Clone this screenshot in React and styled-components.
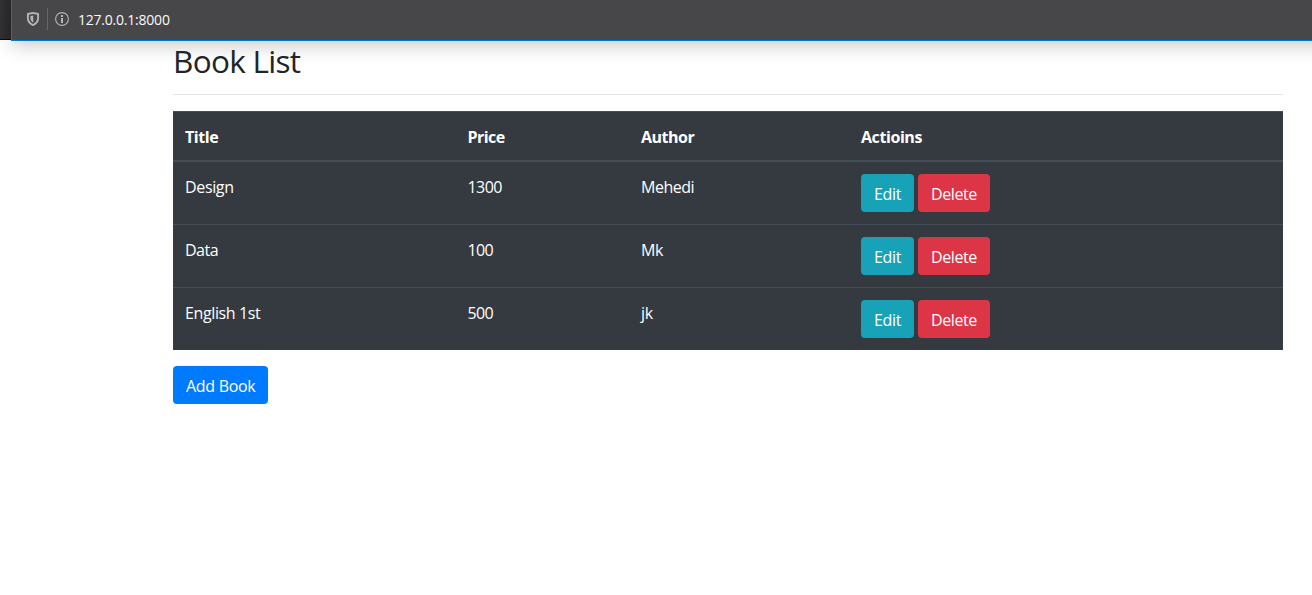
import React from "react";
import styled, { createGlobalStyle } from "styled-components";

const GlobalStyle = createGlobalStyle`
  *, *::before, *::after { box-sizing: border-box; }
  body {
    margin: 0;
    background: #fff;
    color: #212529;
    font-family: "Segoe UI", "Open Sans", "Noto Sans", sans-serif;
    font-size: 16px;
    line-height: 24px;
    overflow: hidden;
  }
`;

const Chrome = styled.header`
  display: flex;
  height: 41px;
`;

const TabEdge = styled.div`
  width: 11px;
  height: 40px;
  background: linear-gradient(90deg, #323234, #29292a);
  border-bottom: 1px solid #0c0c0d;
`;

const AddressBar = styled.div`
  flex: 1;
  display: flex;
  align-items: center;
  height: 41px;
  margin-right: -24px;
  padding: 0 0 2px 14px;
  background: #474749;
  border-left: 1px solid #0078d7;
  border-bottom: 1px solid #0078d7;
  box-shadow: 0 5px 20px -1px rgba(0, 0, 0, 0.22);
  color: #b4b4b6;
`;

const Divider = styled.span`
  width: 1px;
  height: 22px;
  margin: 0 7px 0 7px;
  background: #66666d;
`;

const Address = styled.span`
  margin-left: 9px;
  padding-top: 1px;
  color: #f9f9fa;
  font-size: 14px;
  line-height: 20px;
  letter-spacing: -0.22px;
  white-space: nowrap;
`;

const Page = styled.main`
  width: 1110px;
  margin-left: 173px;
`;

const Heading = styled.h2`
  margin: 0;
  padding-top: 1px;
  height: 53px;
  font-size: 31.5px;
  line-height: 38px;
  font-weight: 400;
  letter-spacing: -0.7px;
`;

const Rule = styled.hr`
  margin: 0 0 16px;
  border: 0;
  border-top: 1px solid #e5e5e5;
`;

const Table = styled.div`
  background: #343a40;
  color: #fff;
  margin-bottom: 16px;
`;

const Row = styled.div`
  display: grid;
  grid-template-columns: 282.5px 173.5px 220px 1fr;
  height: ${(p) => (p.$first ? 62 : 63)}px;
  border-top: ${(p) => (p.$first ? 0 : 1)}px solid #454d55;
`;

const HeadRow = styled(Row)`
  height: 51px;
  border-top: 1px solid #454d55;
  border-bottom: 2px solid #454d55;
  font-weight: 700;
`;

const Cell = styled.div`
  padding: 13px 12px 0;
  white-space: nowrap;
`;

const ActionCell = styled(Cell)`
  display: flex;
  align-items: flex-start;
  gap: 4px;
  padding-top: 12px;
`;

const Label = styled.span`
  letter-spacing: ${(p) => p.$tracking || 0}px;
`;

const tones = { info: "#17a2b8", danger: "#dc3545", primary: "#007bff" };

const Button = styled.button`
  display: block;
  width: ${(p) => p.$width}px;
  height: 38px;
  padding: 2px 0 0 13px;
  border: 0;
  border-radius: 4px;
  background: ${(p) => tones[p.$tone]};
  color: #fff;
  font: inherit;
  text-align: left;
  white-space: nowrap;
`;

const ShieldIcon = () => (
  <svg width="14" height="16" viewBox="0 0 14 16" fill="none">
    <path d="M7 1.9 12.1 3v4.1c0 3.2-1.7 5.5-5.1 7-3.4-1.5-5.1-3.8-5.1-7V3Z" stroke="currentColor" strokeWidth="1.9" strokeLinejoin="round" />
    <path d="M7.3 4.4v7.2C5.3 10.6 4.4 9 4.4 7V4.9Z" fill="currentColor" />
  </svg>
);

const InfoIcon = () => (
  <svg width="14" height="14" viewBox="0 0 14 14" fill="none">
    <circle cx="7" cy="7" r="6.4" stroke="currentColor" strokeWidth="1.1" />
    <rect x="6" y="3" width="2" height="2" fill="currentColor" />
    <rect x="6" y="6" width="2" height="5" fill="currentColor" />
  </svg>
);

const headings = [
  ["Title", -0.45],
  ["Price", -0.55],
  ["Author", -0.5],
  ["Actioins", -0.42],
];

const books = [
  [["Design", -0.35], ["1300", -0.55], ["Mehedi", -0.48]],
  [["Data", -0.5], ["100", -0.6], ["Mk", -0.4]],
  [["English 1st", -0.38], ["500", -0.6], ["jk", -0.2]],
];

export default function App() {
  return (
    <>
      <GlobalStyle />
      <Chrome>
        <TabEdge />
        <AddressBar>
          <ShieldIcon />
          <Divider />
          <InfoIcon />
          <Address>127.0.0.1:8000</Address>
        </AddressBar>
      </Chrome>
      <Page>
        <Heading>Book List</Heading>
        <Rule />
        <Table>
          <HeadRow>
            {headings.map(([text, tracking]) => (
              <Cell key={text}><Label $tracking={tracking}>{text}</Label></Cell>
            ))}
          </HeadRow>
          {books.map((book, i) => (
            <Row key={i} $first={i === 0}>
              {book.map(([text, tracking]) => (
                <Cell key={text}><Label $tracking={tracking}>{text}</Label></Cell>
              ))}
              <ActionCell>
                <Button $tone="info" $width={53}><Label $tracking={-0.35}>Edit</Label></Button>
                <Button $tone="danger" $width={72}><Label $tracking={-0.4}>Delete</Label></Button>
              </ActionCell>
            </Row>
          ))}
        </Table>
        <Button $tone="primary" $width={95}><Label $tracking={-0.3}>Add Book</Label></Button>
      </Page>
    </>
  );
}
